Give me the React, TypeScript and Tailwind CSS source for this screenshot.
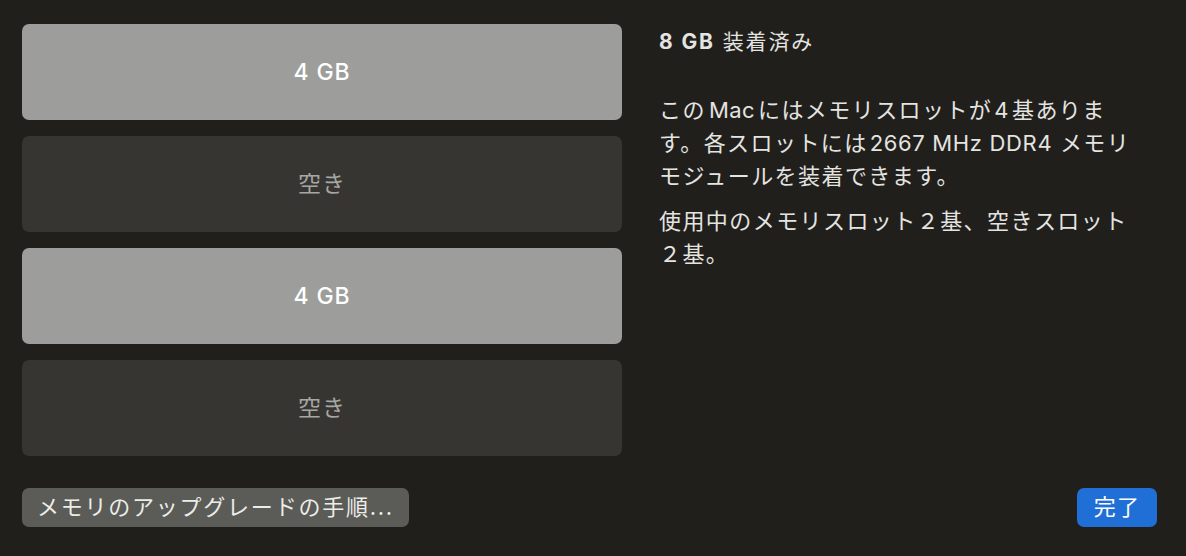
import React from 'react';

const slots = [
  { label: '4 GB', filled: true },
  { label: '空き', filled: false },
  { label: '4 GB', filled: true },
  { label: '空き', filled: false },
];

export default function App() {
  return (
    <div
      className="w-[1186px] h-[556px] bg-[#201f1c] text-[#e4e4e1] flex flex-col px-[22px] pt-[24px] pb-[29px] overflow-hidden"
      style={{ fontFamily: 'Inter, "Noto Sans CJK JP", sans-serif' }}
    >
      <div className="flex gap-[37px] flex-1">
        <div className="w-[600px] flex flex-col gap-[16px]">
          {slots.map((s, i) => (
            <div
              key={i}
              className={`h-[96px] rounded-[7px] flex items-center justify-center text-[23px] tracking-[0.04em] ${
                s.filled ? 'bg-[#9d9d9b] text-white font-medium' : 'bg-[#363532] text-[#a6a6a3]'
              }`}
            >
              {s.label}
            </div>
          ))}
        </div>
        <div className="flex flex-col pt-[5px] text-[22px] leading-[33px] tracking-[0.065em]">
          <div className="leading-[26px] text-[21px] tracking-[0.09em]">
            <span className="font-bold">8 GB</span> 装着済み
          </div>
          <p className="mt-[39px] whitespace-nowrap">
            この<span className="ml-[3px] mr-[3px] tracking-[0.02em]">Mac</span>にはメモリスロットが<span className="mx-[2px]">4</span>基ありま
            <br />
            す。各スロットには<span className="ml-[2px] tracking-[0.03em]">2667 MHz DDR4</span> メモリ
            <br />
            モジュールを装着できます。
          </p>
          <p className="mt-[12px] whitespace-nowrap">
            使用中のメモリスロット２基、空きスロット
            <br />
            ２基。
          </p>
        </div>
      </div>
      <div className="flex items-center justify-between">
        <button className="h-[39px] w-[387px] rounded-[7px] bg-[#5b5b57] text-[22px] tracking-[0.08em] text-[#ecece9] flex items-center justify-center">
          メモリのアップグレードの手順...
        </button>
        <button className="h-[39px] w-[80px] mr-[7px] rounded-[7px] bg-[#1f6fd6] text-[22px] tracking-[0.06em] text-white flex items-center justify-center">
          完了
        </button>
      </div>
    </div>
  );
}
